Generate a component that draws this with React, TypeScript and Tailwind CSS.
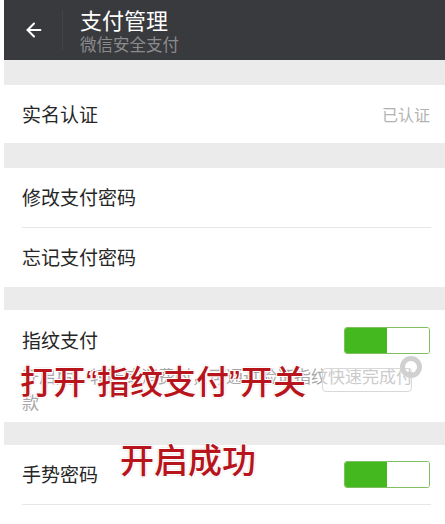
import React from 'react'
import { ArrowLeft } from 'lucide-react'

const font = { fontFamily: '"Noto Sans CJK SC", "Noto Sans", sans-serif' }
const latin = { fontFamily: '"Liberation Sans", Arial, sans-serif' }
const redShadow = {
  textShadow: '1px 1px 0 #fff, -1px -1px 0 #fff, 1px -1px 0 #fff, -1px 1px 0 #fff, 0 0 2px #600',
}

function Toggle() {
  return (
    <div className="flex h-[27px] w-[86px] overflow-hidden rounded-[3px] border border-[#7fbf5f]">
      <div className="w-1/2 bg-[#44b81f]" />
      <div className="w-1/2 bg-white" />
    </div>
  )
}

function Gap({ h }: { h: string }) {
  return <div className={`bg-[#ebebeb] ${h}`} />
}

export default function App() {
  return (
    <div className="relative h-[524px] w-[445px] overflow-hidden bg-white pl-[4px]" style={font}>
      <div className="flex h-[60px] items-center bg-[#393a3e]">
        <div className="flex w-[58px] justify-center pl-[2px]">
          <ArrowLeft className="h-[22px] w-[22px] text-white" strokeWidth={2.2} />
        </div>
        <div className="h-[40px] w-px bg-[#434448]" />
        <div className="ml-[17px] flex flex-col">
          <span className="text-[22px] leading-[28px] text-white">支付管理</span>
          <span className="mt-[1px] text-[16.5px] leading-[21px] text-[#8b8b8d]">微信安全支付</span>
        </div>
      </div>

      <Gap h="h-[25px]" />
      <div className="flex h-[58px] items-center justify-between pl-[18px] pr-[15px]">
        <span className="text-[19px] text-[#262626]">实名认证</span>
        <span className="text-[16px] text-[#b3b3b3]">已认证</span>
      </div>

      <Gap h="h-[25px]" />
      <div className="flex h-[59px] items-center pl-[18px]">
        <span className="text-[19px] text-[#262626]">修改支付密码</span>
      </div>
      <div className="ml-[18px] mr-[14px] h-px bg-[#e6e6e6]" />
      <div className="flex h-[59px] items-center pl-[18px]">
        <span className="text-[19px] text-[#262626]">忘记支付密码</span>
      </div>

      <Gap h="h-[23px]" />
      <div className="relative h-[112px] pl-[18px] pr-[15px]">
        <div className="flex h-[60px] items-center justify-between">
          <span className="text-[19px] text-[#262626]">指纹支付</span>
          <Toggle />
        </div>
        <p className="-mt-[7px] max-w-[396px] text-[17px] leading-[26px] text-[#a8a8a8]">
          开启后，转账或消费时，可通过验证指纹快速完成付款
        </p>
        <div className="absolute left-[318px] top-[58px] h-[24px] w-[90px] rounded-[4px] border border-[#d8d8d8] bg-white/40" />
        <div className="absolute left-[396px] top-[46px] h-[22px] w-[22px] rounded-full border-[5px] border-[#d0d0d0]" />
        <span
          className="absolute left-[16px] top-[50px] whitespace-nowrap text-[33px] font-medium leading-[40px] text-[#b8141c]"
          style={redShadow}
        >
          打开<span style={latin}>“</span>指纹支付<span style={latin}>”</span>开关
        </span>
      </div>

      <Gap h="h-[23px]" />
      <div className="relative flex h-[59px] items-center justify-between pl-[18px] pr-[15px]">
        <span className="text-[19px] text-[#262626]">手势密码</span>
        <Toggle />
        <span
          className="absolute left-[116px] top-[-7px] text-[34px] font-medium leading-[42px] text-[#b8141c]"
          style={redShadow}
        >
          开启成功
        </span>
      </div>
      <div className="ml-[18px] mr-[14px] h-px bg-[#e6e6e6]" />
      <div className="flex h-[59px] items-center pl-[18px]">
        <span className="text-[19px] text-[#262626]">修改手势密码</span>
      </div>
    </div>
  )
}
